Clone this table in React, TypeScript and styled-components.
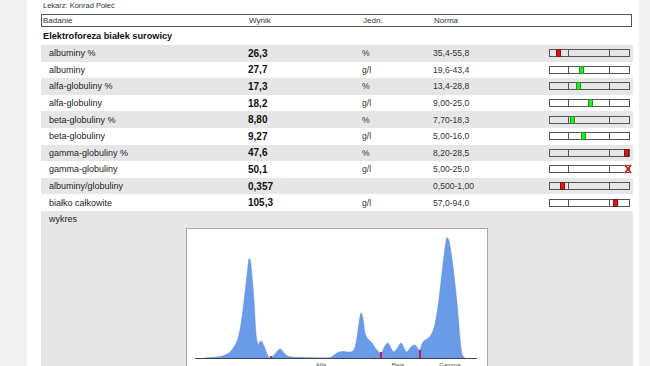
import React from 'react';
import styled, { createGlobalStyle } from 'styled-components';

type Tone = 'ok' | 'bad' | 'out';

type Result = {
    name: string;
    value: string;
    unit: string;
    norm: string;
    tone: Tone;
    pos?: number;
};

const results: Result[] = [
    { name: 'albuminy %', value: '26,3', unit: '%', norm: '35,4-55,8', tone: 'bad', pos: 6 },
    { name: 'albuminy', value: '27,7', unit: 'g/l', norm: '19,6-43,4', tone: 'ok', pos: 29 },
    { name: 'alfa-globuliny %', value: '17,3', unit: '%', norm: '13,4-28,8', tone: 'ok', pos: 26 },
    { name: 'alfa-globuliny', value: '18,2', unit: 'g/l', norm: '9,00-25,0', tone: 'ok', pos: 38 },
    { name: 'beta-globuliny %', value: '8,80', unit: '%', norm: '7,70-18,3', tone: 'ok', pos: 20 },
    { name: 'beta-globuliny', value: '9,27', unit: 'g/l', norm: '5,00-16,0', tone: 'ok', pos: 31 },
    { name: 'gamma-globuliny %', value: '47,6', unit: '%', norm: '8,20-28,5', tone: 'bad', pos: 74 },
    { name: 'gamma-globuliny', value: '50,1', unit: 'g/l', norm: '5,00-25,0', tone: 'out' },
    { name: 'albuminy/globuliny', value: '0,357', unit: '', norm: '0,500-1,00', tone: 'bad', pos: 10 },
    { name: 'białko całkowite', value: '105,3', unit: 'g/l', norm: '57,0-94,0', tone: 'bad', pos: 63 },
];

// densitogram outline, in chart pixels (baseline at y=129)
const curve: [number, number][] = [
    [18, 129], [30, 128], [38, 126], [44, 122], [50, 112], [54, 95], [58, 64], [61, 37], [62, 30],
    [64, 36], [67, 72], [69, 104], [71, 115], [74, 112], [77, 117], [81, 127], [84, 128.5],
    [88, 125], [93, 120], [97, 124], [102, 127.5], [115, 128.5], [140, 129], [145, 127.5],
    [150, 124], [155, 122.5], [165, 122.5], [169, 114], [172, 94], [174, 84], [176, 90],
    [178, 104], [181, 110], [185, 114], [189, 120], [194, 124], [198, 117], [201, 114],
    [204, 119], [207, 123], [211, 118], [214, 114], [217, 119], [220, 123], [224, 118],
    [228, 116], [231, 120], [233, 121], [236, 113], [240, 110], [244, 106], [248, 95],
    [252, 70], [256, 35], [259, 12], [260, 9], [262, 12], [265, 30], [268, 55], [271, 85],
    [273, 110], [275, 125], [278, 129],
];

const BASE = 129;

function smoothPath(pts: [number, number][]) {
    let d = `M${pts[0][0]},${BASE} L${pts[0][0]},${pts[0][1]}`;
    for (let i = 0; i < pts.length - 1; i++) {
        const p0 = pts[i - 1] || pts[i];
        const p1 = pts[i];
        const p2 = pts[i + 1];
        const p3 = pts[i + 2] || p2;
        const c1x = p1[0] + (p2[0] - p0[0]) / 6;
        const c1y = p1[1] + (p2[1] - p0[1]) / 6;
        const c2x = p2[0] - (p3[0] - p1[0]) / 6;
        const c2y = p2[1] - (p3[1] - p1[1]) / 6;
        d += ` C${c1x.toFixed(1)},${c1y.toFixed(1)} ${c2x.toFixed(1)},${c2y.toFixed(1)} ${p2[0]},${p2[1]}`;
    }
    return d + ` L${pts[pts.length - 1][0]},${BASE} Z`;
}

const GlobalStyle = createGlobalStyle`
    html, body {
        margin: 0;
        padding: 0;
        background: #f1f1f1;
        font-family: "Liberation Sans", Arial, sans-serif;
        color: #222;
    }
`;

const Page = styled.div`
    margin-left: 27px;
    width: 612px;
    min-height: 100vh;
    box-sizing: border-box;
    padding: 0 6px 0 14px;
    background: #fff;
    overflow: hidden;
`;

const Doctor = styled.div`
    padding-left: 2px;
    height: 11px;
    line-height: 11px;
    font-size: 7.5px;
    color: #333;
    margin-bottom: 3px;
`;

const columns = '207px 114px 71px 116px 1fr';

const HeaderRow = styled.div`
    display: grid;
    grid-template-columns: ${columns};
    height: 13px;
    box-sizing: border-box;
    border: 1px solid #555;
    margin-right: 1px;
    font-size: 8px;
    line-height: 11px;
    color: #333;
    & > span:first-child {
        padding-left: 1px;
    }
`;

const SectionTitle = styled.div`
    height: 18px;
    padding-left: 2px;
    line-height: 18px;
    font-size: 9.2px;
    font-weight: bold;
    color: #111;
`;

const Row = styled.div<{ $shade: boolean }>`
    display: grid;
    grid-template-columns: ${columns};
    align-items: center;
    height: 16.6px;
    background: ${p => (p.$shade ? '#e6e6e6' : '#fff')};
`;

const Name = styled.span`
    padding-left: 8px;
    font-size: 9px;
    color: #222;
`;

const Value = styled.span`
    font-size: 10px;
    font-weight: bold;
    color: #111;
`;

const Small = styled.span`
    font-size: 8.6px;
    color: #333;
`;

const Track = styled.div`
    position: relative;
    display: grid;
    grid-template-columns: 18px 42px 1fr;
    width: 81px;
    height: 8px;
    box-sizing: border-box;
    border: 1px solid #555;
    & > i:nth-child(2) {
        border-left: 1px solid #555;
        border-right: 1px solid #555;
    }
`;

const Marker = styled.div<{ $tone: Tone }>`
    position: absolute;
    top: -1px;
    bottom: -1px;
    width: 5px;
    box-sizing: border-box;
    background: ${p => (p.$tone === 'ok' ? '#2ee62e' : '#d41818')};
    border: 1px solid ${p => (p.$tone === 'ok' ? '#1a9a1a' : '#8e1010')};
`;

const OutMark = styled.svg`
    position: absolute;
    right: -3px;
    top: -2px;
`;

const PlotSection = styled.div`
    background: #e6e6e6;
    min-height: 160px;
`;

const PlotLabel = styled.div`
    height: 17px;
    line-height: 17px;
    padding-left: 8px;
    font-size: 9px;
    color: #222;
`;

const ChartFrame = styled.div`
    width: 300px;
    height: 150px;
    margin: 0 auto;
    border: 1px solid #a8a8a8;
    background: #fff;
    & > svg {
        display: block;
    }
`;

function RangeBar({ tone, pos }: { tone: Tone; pos?: number }) {
    return (
        <Track>
            <i />
            <i />
            <i />
            {tone === 'out' ? (
                <OutMark width="8" height="10" viewBox="0 0 8 10">
                    <path d="M1 1 L7 9 M7 1 L1 9" stroke="#e02020" strokeWidth="1.8" fill="none" />
                </OutMark>
            ) : (
                <Marker $tone={tone} style={{ left: pos }} />
            )}
        </Track>
    );
}

function Densitogram() {
    return (
        <ChartFrame>
            <svg width="300" height="150" viewBox="0 0 300 150">
                <path d={smoothPath(curve)} fill="#6a9be9" stroke="#5a8be0" strokeWidth="0.5" />
                <line x1="8" y1="129.5" x2="290" y2="129.5" stroke="#444" strokeWidth="1" />
                <line x1="84" y1="127" x2="84" y2="129" stroke="#7a1040" strokeWidth="1.5" />
                <line x1="194" y1="123" x2="194" y2="129" stroke="#c0185a" strokeWidth="2" />
                <line x1="233" y1="121" x2="233" y2="129" stroke="#c0185a" strokeWidth="2" />
                <g fontSize="6" fill="#555" textAnchor="middle" fontFamily="Liberation Sans, Arial, sans-serif">
                    <text x="134" y="138">Alfa</text>
                    <text x="211" y="138">Beta</text>
                    <text x="263" y="138">Gamma</text>
                </g>
            </svg>
        </ChartFrame>
    );
}

export default function App() {
    return (
        <>
            <GlobalStyle />
            <Page>
                <Doctor>Lekarz: Konrad Połeć</Doctor>
                <HeaderRow>
                    <span>Badanie</span>
                    <span>Wynik</span>
                    <span>Jedn.</span>
                    <span>Norma</span>
                    <span />
                </HeaderRow>
                <SectionTitle>Elektroforeza białek surowicy</SectionTitle>
                {results.map((r, i) => (
                    <Row key={r.name} $shade={i % 2 === 0}>
                        <Name>{r.name}</Name>
                        <Value>{r.value}</Value>
                        <Small>{r.unit}</Small>
                        <Small>{r.norm}</Small>
                        <RangeBar tone={r.tone} pos={r.pos} />
                    </Row>
                ))}
                <PlotSection>
                    <PlotLabel>wykres</PlotLabel>
                    <Densitogram />
                </PlotSection>
            </Page>
        </>
    );
}
